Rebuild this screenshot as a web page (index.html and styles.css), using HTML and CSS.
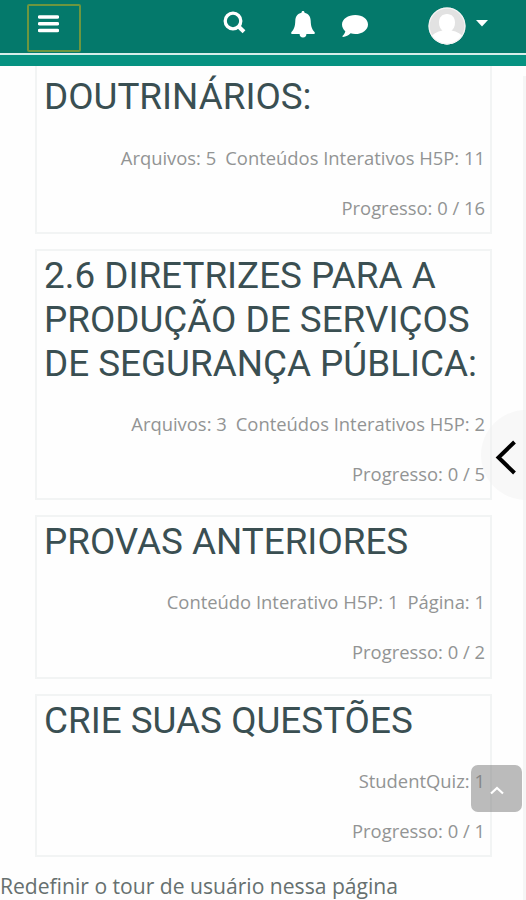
FILE: index.html
```html
<!DOCTYPE html>
<html lang="pt-BR">
<head>
<meta charset="utf-8">
<title>Curso</title>
<link rel="stylesheet" href="styles.css">
</head>
<body>
<header class="navbar">
  <button class="menu" aria-label="Menu"><svg width="21" height="18" viewBox="0 0 21 18"><path d="M1.500 2h18M1.500 8.800h18M1.500 15.500h18" stroke="#fff" stroke-width="3.500" stroke-linecap="round"/></svg></button>
  <svg class="search" width="24" height="24" viewBox="0 0 24 24"><circle cx="10" cy="10" r="7.800" fill="none" stroke="#fff" stroke-width="3.300"/><path d="M15.500 15.500l5.500 5.300" stroke="#fff" stroke-width="4"/></svg>
  <svg class="bell" width="24" height="27" viewBox="0 0 24 27"><path fill="#fff" d="M12 0c1 0 1.500.7 1.500 1.700 4 .8 6 3.800 6.200 8 .2 6 1.300 8.500 3.800 11.300.7.900.2 2-.8 2h-7.300a3.400 3.400 0 0 1-6.800 0H1.300c-1 0-1.500-1.100-.8-2C3 18.200 4.100 15.700 4.300 9.700c.2-4.200 2.200-7.200 6.200-8C10.500.7 11 0 12 0z"/></svg>
  <svg class="chat" width="28" height="24" viewBox="0 0 28 24"><path fill="#fff" d="M14.300 1C21.500 1 27 5.100 27 10.400s-5.500 9.600-12.700 9.600c-1.700 0-3.200-.2-4.700-.7C7.500 21.500 5 22.700 2 23c-.7 0-.8-.7-.3-1.200 1.500-1.600 2.300-3 2.600-4.600C2.500 15.500 1 13 1 10.400 1 5.100 7.100 1 14.300 1z"/></svg>
  <svg class="avatar" width="38" height="38" viewBox="0 0 38 38"><defs><clipPath id="round"><circle cx="19" cy="19" r="18.500"/></clipPath></defs><g clip-path="url(#round)"><path fill="#e2e2e2" d="M0 0h38v38H0z"/><path fill="#fff" d="M19 7c5 0 8 3.500 8 8.500 0 4-1.500 6.500-3.500 8 5.500 1.200 10 3.500 13.500 8V38H1v-6.500c3.500-4.500 8-6.800 13.500-8-2-1.500-3.500-4-3.500-8C11 10.500 14 7 19 7z"/></g><circle cx="19" cy="19" r="17.900" fill="none" stroke="#f4f4f4" stroke-width="1.200"/></svg>
  <svg class="caret" width="12" height="7" viewBox="0 0 12 7"><path fill="#fff" d="M0 0h12L6 6.500z"/></svg>
</header>
<div class="strip"></div>
<main class="sections">
  <section class="card first">
    <h2>DOUTRINÁRIOS:</h2>
    <p class="info"><span>Arquivos: 5</span><span>Conteúdos Interativos H5P: 11</span></p>
    <p class="info">Progresso: 0 / 16</p>
  </section>
  <section class="card">
    <h2>2.6 DIRETRIZES PARA A<br>PRODUÇÃO DE SERVIÇOS<br>DE SEGURANÇA PÚBLICA:</h2>
    <p class="info"><span>Arquivos: 3</span><span>Conteúdos Interativos H5P: 2</span></p>
    <p class="info">Progresso: 0 / 5</p>
  </section>
  <section class="card">
    <h2>PROVAS ANTERIORES</h2>
    <p class="info"><span>Conteúdo Interativo H5P: 1</span><span>Página: 1</span></p>
    <p class="info">Progresso: 0 / 2</p>
  </section>
  <section class="card">
    <h2>CRIE SUAS QUESTÕES</h2>
    <p class="info">StudentQuiz: 1</p>
    <p class="info">Progresso: 0 / 1</p>
  </section>
</main>
<footer class="tour">Redefinir o tour de usuário nessa página</footer>
<div class="edge"></div>
<div class="drawer"><svg width="22" height="36" viewBox="0 0 22 36"><path d="M19.500 2L3.500 17.500l16 15.500" fill="none" stroke="#000" stroke-width="4"/></svg></div>
<div class="to-top"><svg width="14" height="9" viewBox="0 0 14 9"><path d="M1 7.500l6-5.500 6 5.500" fill="none" stroke="#fff" stroke-width="2.200"/></svg></div>
</body>
</html>
```
FILE: styles.css
```css
* { box-sizing: border-box; }
body {
  margin: 0;
  height: 900px;
  position: relative;
  overflow: hidden;
  background: #fefefe;
  font-family: "Open Sans", sans-serif;
}
h2, p { margin: 0; }
svg { display: block; flex: none; }
.navbar {
  display: flex;
  align-items: flex-start;
  height: 53px;
  padding-left: 27px;
  background: #04796b;
}
.menu {
  width: 54px;
  height: 48px;
  margin-top: 4px;
  padding: 10px 0 0 9px;
  border: 2px solid #6d963f;
  border-radius: 2px;
  background: none;
  display: flex;
  align-items: flex-start;
}
.menu svg { margin-top: -1px; }
.search { margin: 11px 0 0 142px; }
.bell { margin: 11px 0 0 44px; }
.chat { margin: 14px 0 0 26px; }
.avatar { margin: 7px 0 0 59px; }
.caret { margin: 20px 0 0 10px; }
.strip {
  height: 13px;
  border-top: 2px solid #d5eeea;
  background: #059281;
}
.sections {
  display: flex;
  flex-direction: column;
  gap: 15px;
  padding: 0 34px 0 35px;
}
.card {
  padding: 3px 5px 0 7px;
  border: 2px solid #f2f4f4;
}
.card.first {
  height: 168px;
  padding-top: 9px;
  border-top: 0;
}
.card.first h2 { margin-bottom: 14px; }
h2 {
  margin-bottom: 13px;
  font: 400 36.850px/44px Roboto, sans-serif;
  color: #3a4f52;
  white-space: nowrap;
}
.info {
  display: flex;
  justify-content: flex-end;
  gap: 9px;
  font-size: 18.400px;
  line-height: 50px;
  height: 50px;
  color: #929494;
  white-space: nowrap;
}
.info:last-child { height: 49.300px; }
.tour {
  margin-top: 14px;
  font-size: 21.100px;
  line-height: 30px;
  color: #66706f;
  white-space: nowrap;
}
.edge {
  position: absolute;
  right: 0;
  top: 76px;
  bottom: 0;
  width: 3px;
  background: #f5f5f5;
}
.drawer {
  position: absolute;
  right: 0;
  top: 410px;
  width: 45px;
  height: 90px;
  padding: 30px 0 0 14px;
  border-radius: 45px 0 0 45px;
  background: rgba(240, 240, 240, .4);
}
.to-top {
  position: absolute;
  left: 471px;
  top: 765px;
  width: 51px;
  height: 47px;
  padding: 21px 0 0 19px;
  border-radius: 7px;
  background: rgba(120, 120, 120, .5);
}
```
